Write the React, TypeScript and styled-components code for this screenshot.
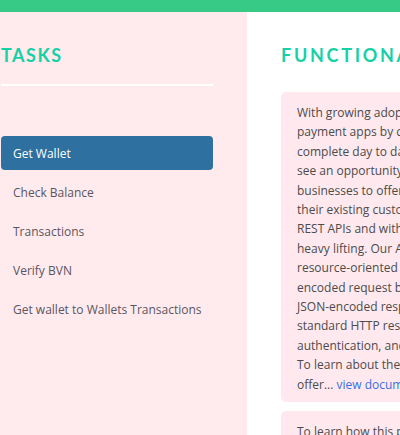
import React from 'react'
import styled, { createGlobalStyle } from 'styled-components'

const GlobalStyle = createGlobalStyle`
    html, body {
        margin: 0;
        padding: 0;
        overflow: hidden;
        background: #fff;
    }
    body {
        font-family: "Open Sans", "Noto Sans", sans-serif;
        font-size: 12px;
        color: #4b4b4b;
    }
`

const TopBar = styled.div`
    height: 12px;
    background-color: #37c986;
`

const Layout = styled.div`
    display: flex;
    align-items: stretch;
    width: 900px;
    min-height: 423px;
`

const Sidebar = styled.aside`
    width: 247px;
    flex-shrink: 0;
    background-color: #ffebee;
    padding: 0 34px 0 1px;
    box-sizing: border-box;
`

const Main = styled.main`
    flex: 1;
    padding: 0 0 0 34px;
`

const Heading = styled.h2<{ spacing: number }>`
    margin: 0;
    padding: 31px 0 0;
    font-family: Lato, sans-serif;
    font-weight: 700;
    font-size: 18px;
    line-height: 24px;
    letter-spacing: ${p => p.spacing}px;
    color: #16d0a6;
`

const Divider = styled.hr`
    margin: 17px 0 0;
    border: none;
    height: 2px;
    background-color: #fff;
`

const NavList = styled.ul`
    list-style: none;
    margin: 50px 0 0;
    padding: 0;
    display: flex;
    flex-direction: column;
    gap: 5px;
`

const NavItem = styled.li<{ active?: boolean }>`
    height: 34px;
    display: flex;
    align-items: center;
    padding: 0 8px 0 12px;
    border-radius: 4px;
    font-size: 12px;
    white-space: nowrap;
    cursor: pointer;
    color: ${p => (p.active ? '#fff' : '#5a5560')};
    background-color: ${p => (p.active ? '#2e70a0' : 'transparent')};
`

const Cards = styled.div`
    margin-top: 25px;
    display: flex;
    flex-direction: column;
    gap: 9px;
    width: 330px;
`

const Card = styled.section`
    background-color: #ffe9ee;
    border-radius: 5px;
    padding: 11px 16px 8px;
`

const Text = styled.p`
    margin: 0;
    line-height: 19.4px;
    white-space: nowrap;
`

const Link = styled.a`
    color: #3b6fe3;
    text-decoration: none;
`

const tasks = [
    'Get Wallet',
    'Check Balance',
    'Transactions',
    'Verify BVN',
    'Get wallet to Wallets Transactions',
]

const intro = [
    'With growing adoption of mobile',
    'payment apps by customers to',
    'complete day to day transactions, we',
    'see an opportunity for banks and',
    'businesses to offer wallet services to',
    'their existing customers through our',
    'REST APIs and with us doing all the',
    'heavy lifting. Our API has predictable',
    'resource-oriented URLs, accepts form-',
    'encoded request bodies, returns',
    'JSON-encoded responses, and uses',
    'standard HTTP response codes,',
    'authentication, and verbs.',
    'To learn about the services we',
]

export default function App() {
    return (
        <>
            <GlobalStyle />
            <TopBar />
            <Layout>
                <Sidebar>
                    <Heading spacing={1.5}>TASKS</Heading>
                    <Divider />
                    <NavList>
                        {tasks.map((t, i) => (
                            <NavItem key={t} active={i === 0}>{t}</NavItem>
                        ))}
                    </NavList>
                </Sidebar>
                <Main>
                    <Heading spacing={2.7}>FUNCTIONALITIES</Heading>
                    <Cards>
                        <Card>
                            <Text>
                                {intro.map(line => (
                                    <React.Fragment key={line}>{line}<br /></React.Fragment>
                                ))}
                                offer... <Link href="#">view documentation</Link>
                            </Text>
                        </Card>
                        <Card>
                            <Text>To learn how this platform works, read the guide</Text>
                        </Card>
                    </Cards>
                </Main>
            </Layout>
        </>
    )
}
